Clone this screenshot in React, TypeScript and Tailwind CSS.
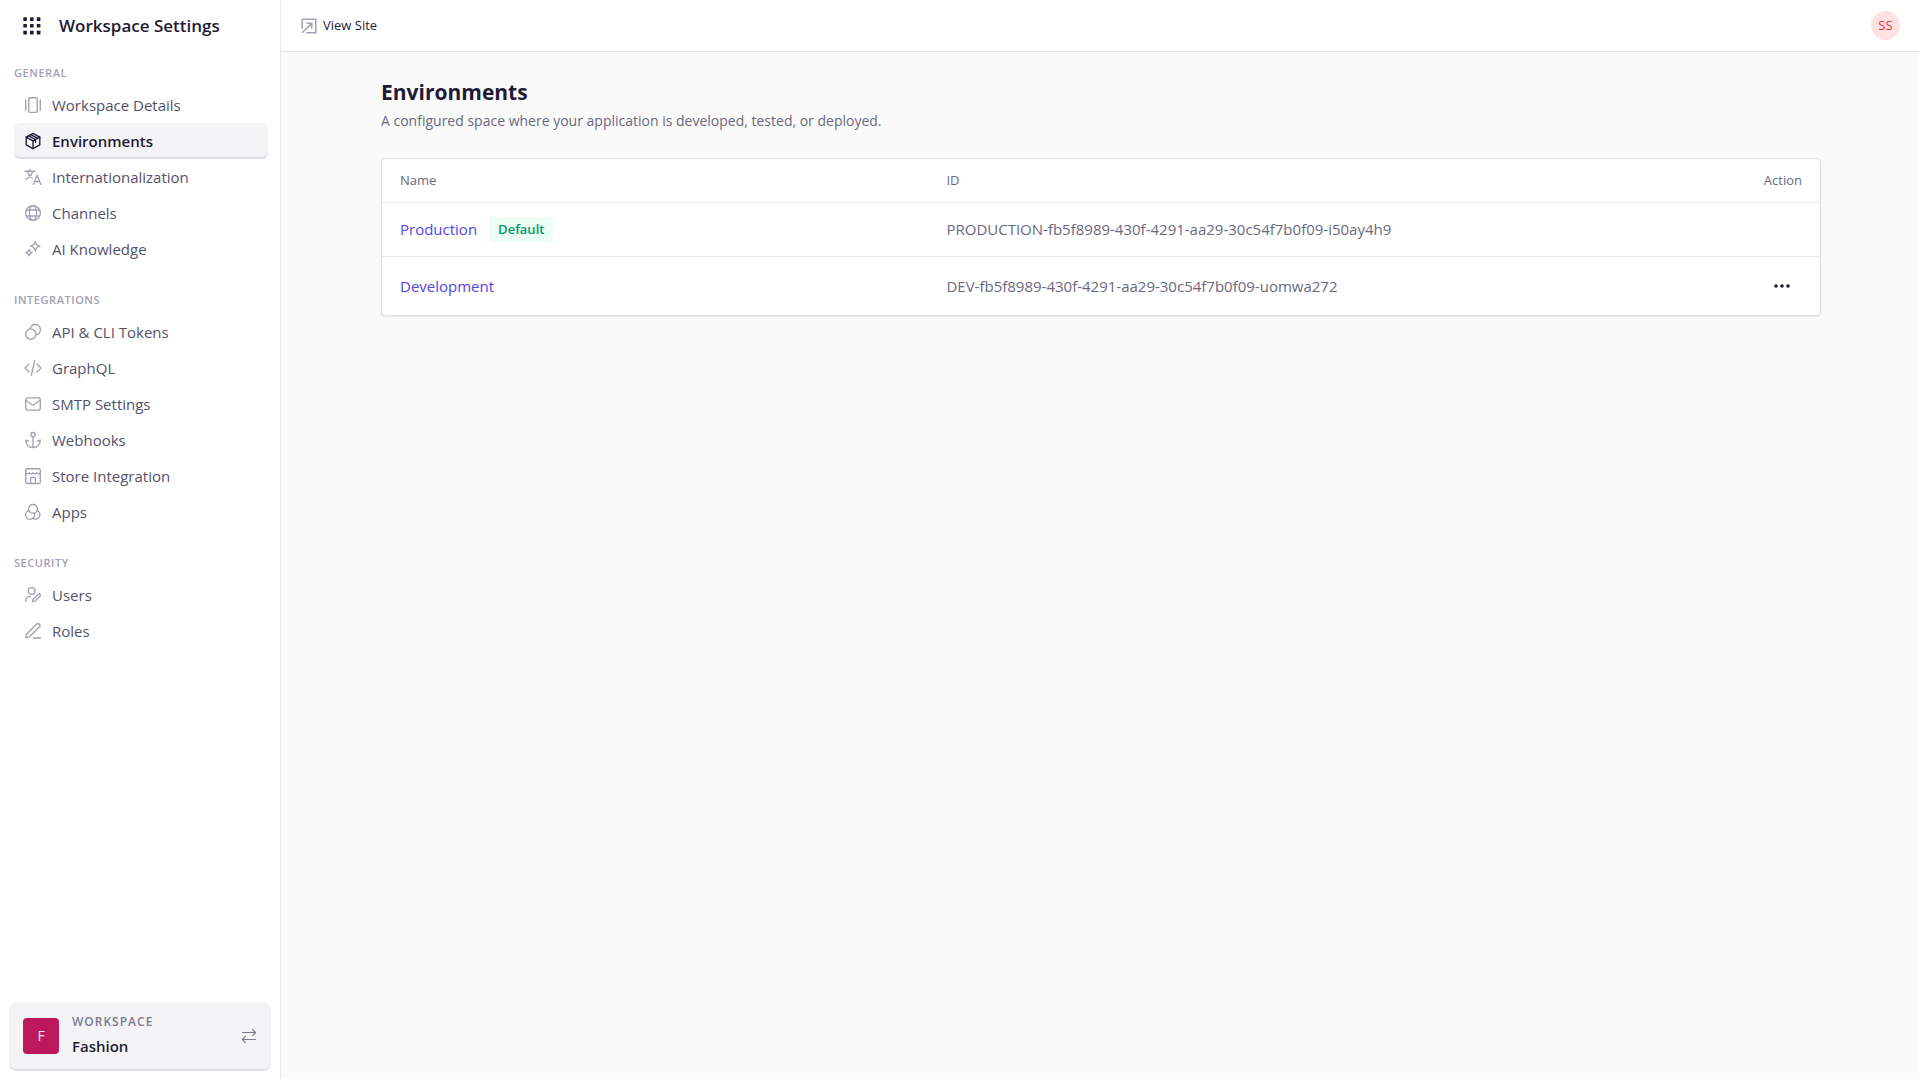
import type { ReactNode } from 'react'

interface NavItem {
  label: string
  icon: ReactNode
  active?: boolean
}

interface NavSection {
  title: string
  items: NavItem[]
}

interface Environment {
  name: string
  id: string
  isDefault: boolean
}

const NAV_SECTIONS: NavSection[] = [
  {
    title: 'General',
    items: [
      {
        label: 'Workspace Details',
        icon: (
          <>
            <rect x="4.8" y="1.7" width="8.4" height="14.6" rx="0.8" />
            <path d="M1.7 3.8v10.4M16.3 3.8v10.4" />
          </>
        ),
      },
      {
        label: 'Environments',
        active: true,
        icon: (
          <>
            <path d="M9 1.4l6.8 3.7v7.8L9 16.6l-6.8-3.7V5.1L9 1.4z" />
            <path d="M2.2 5.1L9 8.9l6.8-3.8M9 8.9v7.7M4.7 3.8l6.8 3.7v2.7M6.9 2.6l6.7 3.7" />
          </>
        ),
      },
      {
        label: 'Internationalization',
        icon: (
          <path d="M1 3.2h10M6 1.4v1.8M8.7 3.2c-.9 3.7-3.6 6.7-7 8.3M3.3 3.2c.8 2.8 2.6 5.2 5 6.8M9.4 16.4l3.7-9.2 3.7 9.2M10.5 13.5h5.2" />
        ),
      },
      {
        label: 'Channels',
        icon: (
          <>
            <circle cx="9" cy="9" r="7.4" />
            <ellipse cx="9" cy="9" rx="3.6" ry="7.4" />
            <path d="M2.4 6h13.2M2.4 12h13.2" />
          </>
        ),
      },
      {
        label: 'AI Knowledge',
        icon: (
          <>
            <path d="M11.3 1.4c.5 2.8 1.9 4.3 4.7 4.8-2.8.5-4.2 2-4.7 4.8-.5-2.8-1.9-4.3-4.7-4.8 2.8-.5 4.2-2 4.7-4.8z" />
            <path d="M5 9.4c.4 1.9 1.3 2.8 3.2 3.2-1.9.4-2.8 1.3-3.2 3.2-.4-1.9-1.3-2.8-3.2-3.2 1.9-.4 2.8-1.3 3.2-3.2z" />
          </>
        ),
      },
    ],
  },
  {
    title: 'Integrations',
    items: [
      {
        label: 'API & CLI Tokens',
        icon: (
          <>
            <circle cx="6.8" cy="11.1" r="5.2" />
            <path d="M6.1 5.9a5.2 5.2 0 1 1 5.9 5.9" />
          </>
        ),
      },
      {
        label: 'GraphQL',
        icon: <path d="M5 5L1 9l4 4M13 5l4 4-4 4M10.6 1.6L7.4 16.4" />,
      },
      {
        label: 'SMTP Settings',
        icon: (
          <>
            <rect x="1.7" y="2.9" width="14.6" height="12.2" rx="2" />
            <path d="M1.9 5.3l5.9 4.2a2 2 0 0 0 2.4 0l5.9-4.2" />
          </>
        ),
      },
      {
        label: 'Webhooks',
        icon: (
          <>
            <circle cx="9" cy="3.5" r="2.2" />
            <path d="M9 5.7v10.8M4.4 10.2L1.7 9.1c0 4.4 3 7.4 7.3 7.4s7.3-3 7.3-7.4l-2.7 1.1" />
          </>
        ),
      },
      {
        label: 'Store Integration',
        icon: (
          <>
            <rect x="1.7" y="1.7" width="14.6" height="14.8" rx="1.6" />
            <path d="M1.7 5.8c1 1.4 2.6 1.4 3.6 0 1 1.4 2.7 1.4 3.7 0 1 1.4 2.7 1.4 3.7 0 1 1.4 2.6 1.4 3.6 0M6.6 16.5v-5.2c0-.5.4-.9.9-.9h3c.5 0 .9.4.9.9v5.2" />
          </>
        ),
      },
      {
        label: 'Apps',
        icon: (
          <>
            <circle cx="9" cy="5.9" r="4.4" />
            <path d="M5 7.6a4.4 4.4 0 1 0 5.4 3.3c-.1-.4-.2-.7-.4-1" />
            <path d="M13 7.6a4.4 4.4 0 1 1-4.4 7.4" />
          </>
        ),
      },
    ],
  },
  {
    title: 'Security',
    items: [
      {
        label: 'Users',
        icon: (
          <>
            <circle cx="7.6" cy="5" r="3.4" />
            <path d="M1.7 15.2v-.6c0-2.3 1.8-4 4-4h.9M8.6 15.6l.3-2 5.2-5.2a1.3 1.3 0 0 1 1.9 1.9l-5.3 5-2.1.3z" />
          </>
        ),
      },
      {
        label: 'Roles',
        icon: (
          <path d="M1.8 15.7l.6-3.4L12.5 2.2a2 2 0 0 1 2.9 2.9L5.2 15.1l-3.4.6zM9.4 16h7" />
        ),
      },
    ],
  },
]

const ENVIRONMENTS: Environment[] = [
  { name: 'Production',  id: 'PRODUCTION-fb5f8989-430f-4291-aa29-30c54f7b0f09-i50ay4h9', isDefault: true },
  { name: 'Development', id: 'DEV-fb5f8989-430f-4291-aa29-30c54f7b0f09-uomwa272',        isDefault: false },
]

export default function App() {
  return (
    <div className="flex min-h-screen bg-[#fafafa] font-['Open_Sans','Noto_Sans',sans-serif] text-[#1f1b35]">
      <Sidebar />
      <div className="flex min-w-0 flex-1 flex-col">
        <TopBar />
        <div className="pt-[26px] pl-0.5">
          <main className="mx-auto w-full max-w-[1440px]">
            <h1 className="text-[21px] leading-7 font-bold">Environments</h1>
            <p className="mt-1 text-sm leading-[22px] text-[#6b6880]">
              A configured space where your application is developed, tested, or deployed.
            </p>
            <EnvironmentTable />
          </main>
        </div>
      </div>
    </div>
  )
}

function Sidebar() {
  return (
    <aside className="sticky top-0 flex h-screen w-[281px] shrink-0 flex-col border-r border-[#e9e9ec] bg-white">
      <div className="flex h-[51px] shrink-0 items-center gap-[18px] px-[23px]">
        <button type="button" aria-label="Open menu">
          <svg viewBox="0 0 18 18" className="size-[18px]" fill="currentColor">
            {[0.3, 7, 13.8].map(y =>
              [0.3, 7, 13.8].map(x => <rect key={`${x}-${y}`} x={x} y={y} width="3.6" height="3.6" rx="0.4" />)
            )}
          </svg>
        </button>
        <span className="text-[17px] leading-6 font-semibold">Workspace Settings</span>
      </div>

      <nav className="flex flex-1 flex-col gap-[23px] overflow-y-auto pt-3 pr-3 pl-3.5">
        {NAV_SECTIONS.map(section => (
          <section key={section.title}>
            <h2 className="mb-1 text-[11px] leading-5 font-semibold tracking-wider text-[#a3a0b5] uppercase">
              {section.title}
            </h2>
            {section.items.map(item => (
              <a
                key={item.label}
                href="#"
                aria-current={item.active ? 'page' : undefined}
                className={`flex h-9 items-center gap-2.5 rounded-md px-2.5 text-[15px] ${
                  item.active
                    ? 'bg-[#f4f4f7] font-semibold text-[#1f1b35] shadow-[inset_0_-2px_0_#e0dfe6]'
                    : 'text-[#55516b]'
                }`}
              >
                <svg
                  viewBox="0 0 18 18"
                  className={`size-[18px] shrink-0 ${item.active ? '' : 'text-[#a3a0b5]'}`}
                  fill="none"
                  stroke="currentColor"
                  strokeWidth="1.35"
                  strokeLinecap="round"
                  strokeLinejoin="round"
                >
                  {item.icon}
                </svg>
                {item.label}
              </a>
            ))}
          </section>
        ))}
      </nav>

      <div className="px-[9px] pb-2">
        <button
          type="button"
          className="flex h-[69px] w-full items-center rounded-lg bg-[#f4f4f7] px-3.5 pb-0.5 text-left shadow-[inset_0_-2px_0_#e0dfe6]"
        >
          <span className="flex size-9 items-center justify-center rounded bg-[#be185d] text-sm text-pink-100">F</span>
          <span className="ml-[13px] flex-1 pb-1">
            <span className="block text-xs leading-6 font-semibold tracking-[1px] text-[#7d7a91]">WORKSPACE</span>
            <span className="block text-[15px] leading-6 font-semibold">Fashion</span>
          </span>
          <svg viewBox="0 0 16 16" className="size-4 text-[#7d7a91]" fill="none" stroke="currentColor" strokeWidth="1.2" strokeLinecap="round" strokeLinejoin="round">
            <path d="M1.5 4.5h13M11.6 1.4l2.9 3.1-2.9 3.1M14.5 11.5h-13M4.4 8.4l-2.9 3.1 2.9 3.1" />
          </svg>
        </button>
      </div>
    </aside>
  )
}

function TopBar() {
  return (
    <header className="flex h-[52px] items-center justify-between border-b border-[#e9e9ec] bg-white pr-[19px] pl-5">
      <a href="#" className="flex items-center gap-1.5 text-[13px]">
        <svg viewBox="0 0 16 16" className="size-4 text-[#a3a0b5]" fill="none" stroke="currentColor" strokeWidth="1.5">
          <path d="M1.2 11V1.2h13.6v13.6H5.2M1.2 14.8l9.4-9.4M5.4 5.2h5.4v5.4" />
        </svg>
        View Site
      </a>
      <button type="button" className="size-[29px] rounded-full bg-red-100 text-[13px] text-red-500">SS</button>
    </header>
  )
}

function EnvironmentTable() {
  return (
    <div className="mt-[26px] rounded border border-[#e0e0e6] bg-white shadow-[0_1px_2px_rgba(0,0,0,0.08)]">
      <table className="w-full border-collapse text-left text-[15px] text-[#6b6880]">
        <thead>
          <tr className="h-[43px] border-b border-[#e9e9ec] text-[13px]">
            <th scope="col" className="w-[38%] px-[18px] font-normal">Name</th>
            <th scope="col" className="px-[18px] font-normal">ID</th>
            <th scope="col" className="px-[18px] text-right font-normal">Action</th>
          </tr>
        </thead>
        <tbody>
          {ENVIRONMENTS.map(env => (
            <tr key={env.id} className={env.isDefault ? 'h-[54px] border-b border-[#e9e9ec]' : 'h-[59px]'}>
              <td className="px-[18px]">
                <div className="flex items-center gap-3">
                  <a href="#" className="text-[#4f46e5]">{env.name}</a>
                  {env.isDefault && (
                    <span className="rounded bg-emerald-50 px-[9px] text-[13px] leading-[25px] font-semibold text-emerald-600">
                      Default
                    </span>
                  )}
                </div>
              </td>
              <td className="px-[18px]">{env.id}</td>
              <td className="px-[18px]">
                {!env.isDefault && (
                  <button
                    type="button"
                    aria-label={`Actions for ${env.name}`}
                    className="ml-auto flex h-9 w-10 items-center justify-center text-[#1f1b35]"
                  >
                    <svg viewBox="0 0 18 18" className="size-[18px]" fill="currentColor">
                      <circle cx="3" cy="9" r="1.8" />
                      <circle cx="9" cy="9" r="1.8" />
                      <circle cx="15" cy="9" r="1.8" />
                    </svg>
                  </button>
                )}
              </td>
            </tr>
          ))}
        </tbody>
      </table>
    </div>
  )
}
